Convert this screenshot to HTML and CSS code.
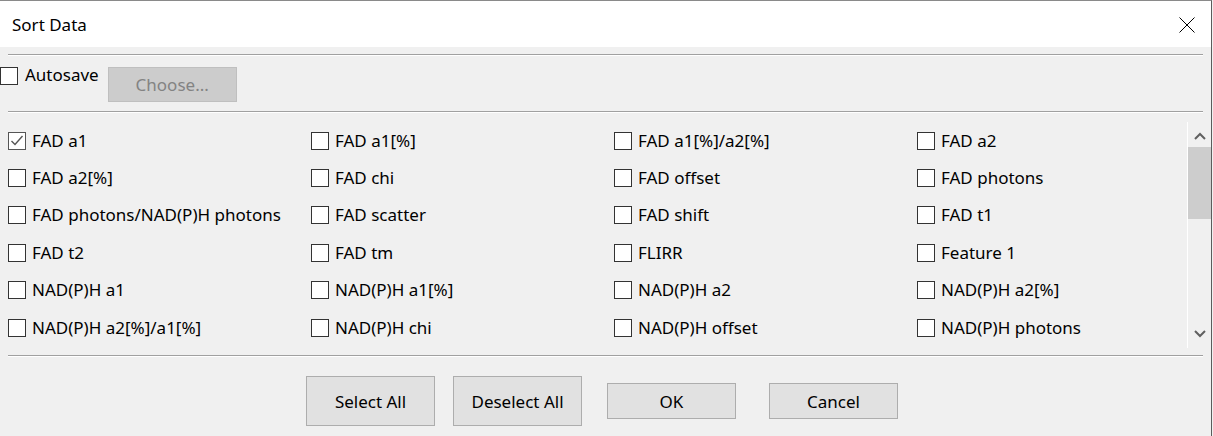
FILE: index.html
```html
<!DOCTYPE html>
<html>
<head>
<meta charset="utf-8">
<title>Sort Data</title>
<link rel="stylesheet" href="styles.css">
</head>
<body>
<div class="window">
  <div class="titlebar">
    <span class="title">Sort Data</span>
    <svg class="close" width="16" height="16" viewBox="0 0 16 16"><path d="M0.5 0.5 L15.5 15.5 M15.5 0.5 L0.5 15.5" stroke="#000" stroke-width="1" fill="none"/></svg>
  </div>
  <div class="sep"></div>
  <div class="autosave-row">
    <label class="check autosave"><span class="box"></span><span class="label">Autosave</span></label>
    <button class="btn disabled">Choose...</button>
  </div>
  <div class="sep sep2"></div>
  <div class="list-area">
    <div class="grid">
      <label class="check"><span class="box checked"><svg width="16" height="16" viewBox="0 0 16 16"><path d="M2.5 8 L6 11.5 L13.5 3" stroke="#555" stroke-width="1.4" fill="none"/></svg></span><span class="label">FAD a1</span></label>
      <label class="check"><span class="box"></span><span class="label">FAD a1[%]</span></label>
      <label class="check"><span class="box"></span><span class="label">FAD a1[%]/a2[%]</span></label>
      <label class="check"><span class="box"></span><span class="label">FAD a2</span></label>
      <label class="check"><span class="box"></span><span class="label">FAD a2[%]</span></label>
      <label class="check"><span class="box"></span><span class="label">FAD chi</span></label>
      <label class="check"><span class="box"></span><span class="label">FAD offset</span></label>
      <label class="check"><span class="box"></span><span class="label">FAD photons</span></label>
      <label class="check"><span class="box"></span><span class="label">FAD photons/NAD(P)H photons</span></label>
      <label class="check"><span class="box"></span><span class="label">FAD scatter</span></label>
      <label class="check"><span class="box"></span><span class="label">FAD shift</span></label>
      <label class="check"><span class="box"></span><span class="label">FAD t1</span></label>
      <label class="check"><span class="box"></span><span class="label">FAD t2</span></label>
      <label class="check"><span class="box"></span><span class="label">FAD tm</span></label>
      <label class="check"><span class="box"></span><span class="label">FLIRR</span></label>
      <label class="check"><span class="box"></span><span class="label">Feature 1</span></label>
      <label class="check"><span class="box"></span><span class="label">NAD(P)H a1</span></label>
      <label class="check"><span class="box"></span><span class="label">NAD(P)H a1[%]</span></label>
      <label class="check"><span class="box"></span><span class="label">NAD(P)H a2</span></label>
      <label class="check"><span class="box"></span><span class="label">NAD(P)H a2[%]</span></label>
      <label class="check"><span class="box"></span><span class="label">NAD(P)H a2[%]/a1[%]</span></label>
      <label class="check"><span class="box"></span><span class="label">NAD(P)H chi</span></label>
      <label class="check"><span class="box"></span><span class="label">NAD(P)H offset</span></label>
      <label class="check"><span class="box"></span><span class="label">NAD(P)H photons</span></label>
    </div>
    <div class="scrollbar">
      <div class="arrow up"><svg width="12" height="8" viewBox="0 0 12 8"><path d="M1 7 L6 2 L11 7" stroke="#606060" stroke-width="2" fill="none"/></svg></div>
      <div class="thumb"></div>
      <div class="spacer"></div>
      <div class="arrow down"><svg width="12" height="8" viewBox="0 0 12 8"><path d="M1 1 L6 6 L11 1" stroke="#606060" stroke-width="2" fill="none"/></svg></div>
    </div>
  </div>
  <div class="sep sep3"></div>
  <div class="actions">
    <button class="btn big select">Select All</button>
    <button class="btn big deselect">Deselect All</button>
    <button class="btn ok">OK</button>
    <button class="btn cancel">Cancel</button>
  </div>
</div>
</body>
</html>
```

FILE: styles.css
```css
html, body {
  margin: 0;
  padding: 0;
  background: #f0f0f0;
}

body {
  font-family: "Noto Sans", "Open Sans", sans-serif;
  font-size: 17px;
  color: #000;
}

.window {
  width: 1211px;
  height: 435px;
  border-top: 1px solid #8a8a8a;
  border-right: 1px solid #5c5c5c;
  background: #f0f0f0;
  display: flex;
  flex-direction: column;
  overflow: hidden;
}

.titlebar {
  height: 46px;
  flex: none;
  background: #fff;
  display: flex;
  align-items: center;
  justify-content: space-between;
  padding: 0 16px 0 12px;
}

.title {
  font-size: 17px;
}

.close {
  display: block;
  margin-top: 1px;
}

.sep {
  flex: none;
  height: 0;
  margin: 7px 8px 0 8px;
  border-top: 1px solid #a0a0a0;
  border-bottom: 1px solid #ffffff;
}

.sep2 {
  margin-top: 9px;
}

.sep3 {
  margin-top: 0;
}

.autosave-row {
  flex: none;
  display: flex;
  align-items: flex-start;
  margin-top: 11px;
  height: 35px;
}

.check {
  display: flex;
  align-items: center;
  white-space: nowrap;
  height: 18px;
}

.box {
  width: 16px;
  height: 16px;
  border: 1px solid #333;
  background: #fff;
  flex: none;
  display: flex;
  align-items: center;
  justify-content: center;
}

.box.checked {
  border-color: #555;
}

.box svg {
  display: block;
}

.label {
  margin-left: 6px;
  line-height: 18px;
}

.autosave .label {
  margin-left: 7px;
  position: relative;
  top: -1px;
}

.btn {
  font-family: inherit;
  font-size: 17px;
  color: #000;
  background: #e1e1e1;
  border: 1px solid #adadad;
  width: 129px;
  height: 36px;
  padding: 0;
  margin: 0;
}

.btn.disabled {
  margin-left: 9px;
  background: #cccccc;
  border-color: #bfbfbf;
  color: #838383;
  height: 35px;
}

.list-area {
  flex: none;
  height: 242px;
  display: flex;
}

.grid {
  flex: 1;
  min-width: 0;
  overflow: hidden;
  display: grid;
  grid-template-columns: repeat(4, 303px);
  grid-auto-rows: 37.4px;
  padding: 9px 0 0 8px;
  align-items: center;
}

.scrollbar {
  flex: none;
  width: 23px;
  height: 226px;
  margin-top: 9px;
  border-left: 1px solid #ffffff;
  display: flex;
  flex-direction: column;
}

.arrow {
  height: 25px;
  display: flex;
  align-items: center;
  justify-content: center;
  flex: none;
}

.arrow.up {
  padding-top: 2px;
  height: 23px;
}

.arrow.down {
  padding-bottom: 4px;
  height: 21px;
}

.thumb {
  height: 72px;
  background: #cdcdcd;
  flex: none;
}

.spacer {
  flex: 1;
}

.actions {
  flex: none;
  display: flex;
  align-items: center;
  padding-top: 19px;
  height: 50px;
  padding-left: 306px;
}

.btn.big {
  height: 50px;
}

.btn.deselect {
  margin-left: 18px;
}

.btn.ok {
  margin-left: 25px;
}

.btn.cancel {
  margin-left: 33px;
}
```
